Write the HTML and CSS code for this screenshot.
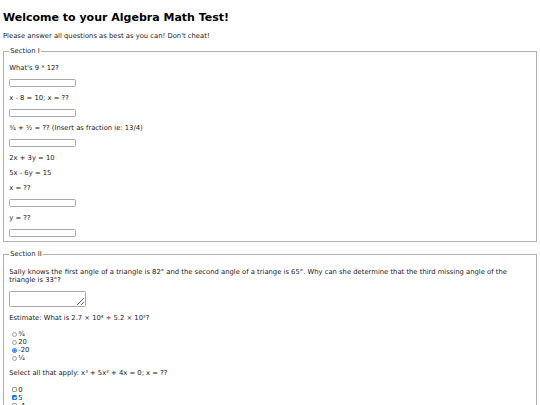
FILE: index.html
```html
<!DOCTYPE html>
<html lang="en">
<head>
<meta charset="utf-8">
<title>Algebra Math Test</title>
<link rel="stylesheet" href="styles.css">
</head>
<body>
<h1 class="title">Welcome to your Algebra Math Test!</h1>
<p class="intro">Please answer all questions as best as you can! Don't cheat!</p>
<form class="test">
  <fieldset class="section">
    <legend class="legend">Section I</legend>
    <p class="q">What's 9 * 12?</p>
    <input class="answer" type="text">
    <p class="q">x - 8 = 10; x = ??</p>
    <input class="answer" type="text">
    <p class="q">¾ + ½ = ?? (Insert as fraction ie: 13/4)</p>
    <input class="answer" type="text">
    <p class="q">2x + 3y = 10</p>
    <p class="q">5x - 6y = 15</p>
    <p class="q">x = ??</p>
    <input class="answer" type="text">
    <p class="q">y = ??</p>
    <input class="answer" type="text">
  </fieldset>
  <fieldset class="section section-two">
    <legend class="legend">Section II</legend>
    <p class="q">Sally knows the first angle of a triangle is 82° and the second angle of a triange is 65°. Why can she determine that the third missing angle of the triangle is 33°?</p>
    <textarea class="essay"></textarea>
    <p class="q">Estimate: What is 2.7 × 10⁴ ÷ 5.2 × 10²?</p>
    <div class="options">
      <label class="opt"><input class="radio" type="radio" name="est">¾</label>
      <label class="opt"><input class="radio" type="radio" name="est">20</label>
      <label class="opt"><input class="radio" type="radio" name="est" checked>-20</label>
      <label class="opt"><input class="radio" type="radio" name="est">¼</label>
    </div>
    <p class="q">Select all that apply: x³ + 5x² + 4x = 0; x = ??</p>
    <div class="options">
      <label class="opt"><input class="check" type="checkbox">0</label>
      <label class="opt"><input class="check" type="checkbox" checked>5</label>
      <label class="opt"><input class="check" type="checkbox">-4</label>
      <label class="opt"><input class="check" type="checkbox">-1</label>
    </div>
  </fieldset>
</form>
</body>
</html>
```

FILE: styles.css
```css
html {
  background: #fff;
}

body {
  margin: 3px;
  font-family: "DejaVu Sans", Verdana, sans-serif;
  font-size: 6.8px;
  color: #222;
}

.title {
  font-size: 11px;
  font-weight: bold;
  color: #000;
  margin: 9px 0 7.5px;
  line-height: 12px;
}

.intro {
  margin: 7px 0;
  line-height: 8px;
}

.test {
  margin: 0;
}

.section {
  margin: 7.5px 0 0;
  padding: 1.5px 5.25px 4px;
  border: 1px solid #b0b0b0;
  min-width: 0;
}

.section-two {
  margin-top: 8.5px;
  padding-top: 2.5px;
}

.legend {
  padding: 0 1px;
  line-height: 8px;
  color: #222;
}

.q {
  margin: 7px 0;
  line-height: 8px;
}

.answer {
  display: block;
  box-sizing: border-box;
  width: 67px;
  height: 8px;
  margin: 0;
  padding: 0;
  border: 1px solid #a8a8a8;
  border-radius: 1.5px;
  background: #fff;
  font-size: 6px;
}

.essay {
  display: block;
  box-sizing: border-box;
  width: 77px;
  height: 16px;
  margin: 0;
  padding: 1px;
  border: 1px solid #a8a8a8;
  border-radius: 1.5px;
  font-size: 6px;
  resize: both;
}

.options {
  display: flex;
  flex-direction: column;
  padding-top: 1.5px;
  margin-bottom: 1px;
}

.opt {
  display: flex;
  align-items: center;
  height: 8px;
  line-height: 8px;
}

.radio,
.check {
  appearance: none;
  -webkit-appearance: none;
  box-sizing: border-box;
  width: 5px;
  height: 5px;
  margin: 0 1.5px 0 2.5px;
  border: 1px solid #a0a0a0;
  background: #fff;
  position: relative;
}

.radio {
  border-radius: 50%;
}

.radio:checked {
  border-color: #1a73e8;
  background: radial-gradient(circle, #1a73e8 0 45%, #fff 55%);
}

.check {
  border-radius: 1px;
}

.check:checked {
  border-color: #1a73e8;
  background: #1a73e8;
}

.check:checked::after {
  content: "";
  position: absolute;
  left: 0.8px;
  top: -0.2px;
  width: 1.2px;
  height: 2.2px;
  border: solid #fff;
  border-width: 0 0.8px 0.8px 0;
  transform: rotate(45deg);
}
```
